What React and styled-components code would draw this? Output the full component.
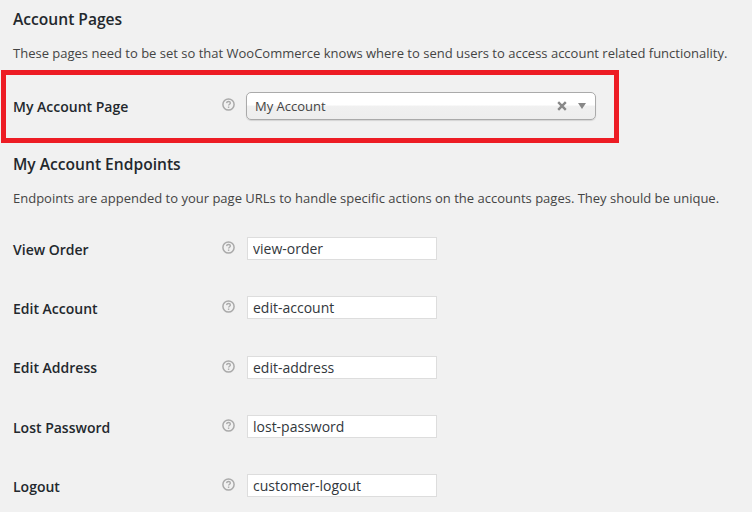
import React from "react";
import styled, { createGlobalStyle } from "styled-components";

const Global = createGlobalStyle`
  html, body { margin: 0; padding: 0; background: #f1f1f1; }
  body { width: 752px; height: 512px; overflow: hidden; font-family: "Open Sans", sans-serif; color: #444; }
`;
const Page = styled.div`
  display: flex;
  flex-direction: column;
  padding: 9px 0 0 13px;
`;
const Heading = styled.h3`
  margin: 0;
  font-size: 15.6px;
  line-height: 21px;
  font-weight: 600;
  color: #23282d;
`;
const Description = styled.p`
  margin: 13px 0 0;
  font-size: 13px;
  line-height: 20px;
  color: #444;
  white-space: nowrap;
`;
const Highlight = styled.div`
  display: flex;
  align-items: center;
  box-sizing: border-box;
  width: 618px;
  height: 73px;
  margin: 7px 0 0 -12px;
  padding: 0 0 0 7px;
  border: 5px solid #ed1c24;
`;
const Row = styled.div`
  display: flex;
  align-items: center;
  height: 59.33px;
`;
const Rows = styled.div`
  display: flex;
  flex-direction: column;
  margin-top: 12px;
`;
const Label = styled.label`
  width: 209px;
  font-size: 14px;
  font-weight: 600;
  line-height: 20px;
  color: #23282d;
  flex: none;
`;
const HelpWrap = styled.span`
  width: 25px;
  flex: none;
  display: flex;
  color: #aaa;
  transform: translateY(-2px);
`;
const Select = styled.div`
  box-sizing: border-box;
  width: 350px;
  height: 28px;
  display: flex;
  align-items: center;
  padding: 0 8px 0 8px;
  border: 1px solid #aaa;
  border-radius: 5px;
  background: linear-gradient(#fff 0%, #fff 45%, #f0f0f0 52%, #eee 100%);
  box-shadow: 0 1px 1px rgba(0,0,0,.12);
  font-size: 13px;
  color: #444;
  margin-left: -1px;
  transform: translateY(-1px);
`;
const SelectValue = styled.span`
  flex: 1;
`;
const Clear = styled.svg`
  width: 10px;
  height: 10px;
  margin-right: 11px;
  display: block;
`;
const Caret = styled.span`
  width: 0;
  height: 0;
  border-left: 4px solid transparent;
  border-right: 4px solid transparent;
  border-top: 6px solid #888;
  margin-right: 1px;
`;
const Input = styled.input`
  box-sizing: border-box;
  width: 190px;
  height: 23px;
  padding: 0 5px;
  border: 1px solid #ddd;
  background: #fff;
  font-family: "Open Sans", sans-serif;
  font-size: 14px;
  color: #32373c;
  outline: none;
  transform: translateY(-1px);
`;

const Help = () => (
  <HelpWrap>
    <svg width="13" height="13" viewBox="0 0 13 13" fill="none">
      <circle cx="6.5" cy="6.5" r="5.6" stroke="#aaa" strokeWidth="1.5" />
      <path d="M4.6 5.1c.1-1.1 1-1.6 1.9-1.6 1.1 0 1.9.6 1.9 1.5 0 1.3-1.8 1.3-1.8 2.6" stroke="#aaa" strokeWidth="1.3" />
      <rect x="5.9" y="8.5" width="1.4" height="1.4" fill="#aaa" />
    </svg>
  </HelpWrap>
);

const endpoints = [
  ["View Order", "view-order"],
  ["Edit Account", "edit-account"],
  ["Edit Address", "edit-address"],
  ["Lost Password", "lost-password"],
  ["Logout", "customer-logout"],
];

export default function App() {
  return (
    <Page>
      <Global />
      <Heading>Account Pages</Heading>
      <Description>These pages need to be set so that WooCommerce knows where to send users to access account related functionality.</Description>
      <Highlight>
        <Label>My Account Page</Label>
        <Help />
        <Select>
          <SelectValue>My Account</SelectValue>
          <Clear viewBox="0 0 10 10">
            <path d="M1.2 1.2l7.6 7.6M8.8 1.2L1.2 8.8" stroke="#888" strokeWidth="2.4" />
          </Clear>
          <Caret />
        </Select>
      </Highlight>
      <Heading style={{ marginTop: 11 }}>My Account Endpoints</Heading>
      <Description>Endpoints are appended to your page URLs to handle specific actions on the accounts pages. They should be unique.</Description>
      <Rows>
        {endpoints.map(([label, value]) => (
          <Row key={value}>
            <Label>{label}</Label>
            <Help />
            <Input defaultValue={value} readOnly />
          </Row>
        ))}
      </Rows>
    </Page>
  );
}
